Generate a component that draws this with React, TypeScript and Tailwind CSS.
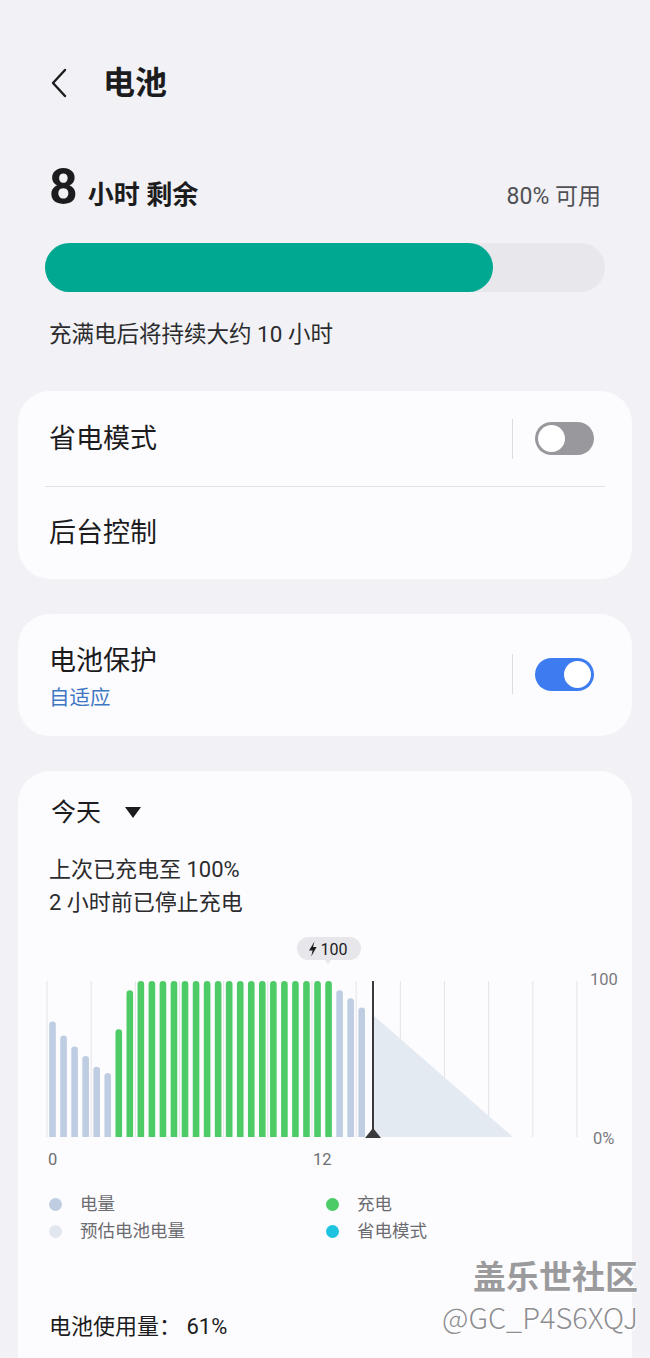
import React from 'react';

const usage: { h: number; c: 'g' | 'b' }[] = [
  { h: 74, c: 'b' },
  { h: 65, c: 'b' },
  { h: 58, c: 'b' },
  { h: 52, c: 'b' },
  { h: 45, c: 'b' },
  { h: 41, c: 'b' },
  { h: 69, c: 'g' },
  { h: 94, c: 'g' },
  ...Array.from({ length: 18 }, () => ({ h: 100, c: 'g' as const })),
  { h: 94, c: 'b' },
  { h: 89, c: 'b' },
  { h: 83, c: 'b' },
];

function Toggle({ on }: { on: boolean }) {
  return (
    <div className="flex items-center">
      <div className="h-[40px] w-px bg-[#dcdce0]" />
      <div
        className={
          on
            ? 'ml-[22px] flex h-[33px] w-[59px] items-center justify-end rounded-full bg-[#3d7cf0] p-[3px]'
            : 'ml-[22px] flex h-[33px] w-[59px] items-center justify-start rounded-full bg-[#98989d] p-[3px]'
        }
      >
        <div className="h-[27px] w-[27px] rounded-full bg-white" />
      </div>
    </div>
  );
}

function UsageChart() {
  const left = 29;
  const right = 559;
  const top = 51;
  const bottom = 207;
  const slot = (right - left) / 48;
  const span = bottom - top;
  const bw = 6.6;

  return (
    <svg width="614" height="245" viewBox="0 0 614 245" className="block">
      {Array.from({ length: 13 }, (_, k) => {
        const x = left + k * slot * 4;
        return <line key={k} x1={x} x2={x} y1={top} y2={bottom} stroke="#e3e3e8" strokeWidth="1" />;
      })}
      <polygon points={`355,85 495,${bottom} 355,${bottom}`} fill="#e4eaf2" />
      {usage.map((b, i) => {
        const cx = left + slot * (i + 0.5);
        const y = bottom - (b.h / 100) * span;
        const r = bw / 2;
        const d = `M${cx - r} ${bottom} L${cx - r} ${y + r} A${r} ${r} 0 0 1 ${cx + r} ${y + r} L${cx + r} ${bottom} Z`;
        return <path key={i} d={d} fill={b.c === 'g' ? '#4ccb66' : '#bfcde2'} />;
      })}
      <line x1="355" x2="355" y1={top} y2={bottom} stroke="#3a3a3c" strokeWidth="2" />
      <polygon points="347,208 363,208 355,198" fill="#3a3a3c" />

      <rect x="279" y="7" width="64" height="23" rx="11.5" fill="#e7e7eb" />
      <polygon points="306,29 314,29 310,34" fill="#e7e7eb" />
      <path d="M296.5 11.5 L291 20.5 L294.6 20.5 L293.2 26.5 L298.6 17 L295 17 Z" fill="#1c1c1e" />
      <text x="302.5" y="24.5" fontSize="16" fill="#1c1c1e" fontFamily="Roboto, sans-serif">
        100
      </text>

      <text x="30" y="235" fontSize="16.5" fill="#6e6e73" fontFamily="Roboto, sans-serif">
        0
      </text>
      <text x="295" y="235" fontSize="16.5" fill="#6e6e73" fontFamily="Roboto, sans-serif">
        12
      </text>
      <text x="572" y="55" fontSize="16.5" fill="#7a7a7f" fontFamily="Roboto, sans-serif">
        100
      </text>
      <text x="575" y="214" fontSize="16.5" fill="#7a7a7f" fontFamily="Roboto, sans-serif">
        0%
      </text>
    </svg>
  );
}

function Legend() {
  const items = [
    { label: '电量', color: 'bg-[#bfcde2]' },
    { label: '充电', color: 'bg-[#4ccb66]' },
    { label: '预估电池电量', color: 'bg-[#e2e7ef]' },
    { label: '省电模式', color: 'bg-[#1ec3df]' },
  ];
  return (
    <div className="mt-[16px] grid grid-cols-[277px_1fr] px-[31px]">
      {items.map((it) => (
        <div key={it.label} className="flex h-[27px] items-center">
          <span className={`h-[13px] w-[13px] rounded-full ${it.color}`} />
          <span className="ml-[18px] text-[17.5px] leading-[27px] text-[#6b6b70]">{it.label}</span>
        </div>
      ))}
    </div>
  );
}

export default function App() {
  return (
    <div className="relative h-[1358px] w-[650px] overflow-hidden bg-[#f2f2f6] font-['Roboto','Noto_Sans_CJK_SC',sans-serif] text-[#1c1c1e]">
      {/* header */}
      <div className="mt-[55px] flex h-[56px] items-center pl-[48px]">
        <svg width="22" height="32" viewBox="0 0 22 32" fill="none">
          <path d="M17 3 L5 16 L17 29" stroke="#1c1c1e" strokeWidth="2.4" strokeLinecap="round" strokeLinejoin="round" />
        </svg>
        <h1 className="ml-[33px] text-[32px] font-bold leading-[40px]">电池</h1>
      </div>

      {/* remaining time */}
      <div className="mt-[49px] flex h-[54px] items-baseline justify-between px-[49px]">
        <div className="flex items-baseline">
          <span className="text-[50px] font-bold leading-[54px]">8</span>
          <span className="ml-[10px] text-[26px] font-bold">小时 剩余</span>
        </div>
        <span className="text-[23px] text-[#505055]">80% 可用</span>
      </div>

      <div className="mx-[45px] mt-[29px] h-[49px] rounded-full bg-[#e8e8ec]">
        <div className="h-full w-[80%] rounded-full bg-[#00a891]" />
      </div>

      <p className="mt-[27px] px-[49px] text-[22.5px] leading-[30px] text-[#2c2c2e]">充满电后将持续大约 10 小时</p>

      {/* card 1 */}
      <div className="mx-[18px] mt-[42px] rounded-[32px] bg-[#fcfcfe]">
        <div className="flex h-[95px] items-center justify-between pl-[31px] pr-[38px]">
          <span className="text-[27px] leading-[34px]">省电模式</span>
          <Toggle on={false} />
        </div>
        <div className="mx-[27px] h-px bg-[#e2e2e6]" />
        <div className="flex h-[92px] items-center pl-[31px]">
          <span className="text-[27px] leading-[34px]">后台控制</span>
        </div>
      </div>

      {/* card 2 */}
      <div className="mx-[18px] mt-[35px] flex items-center justify-between rounded-[32px] bg-[#fcfcfe] pb-[24px] pl-[31px] pr-[38px] pt-[30px]">
        <div className="flex flex-col">
          <span className="text-[27px] leading-[34px]">电池保护</span>
          <span className="mt-[6px] text-[20.5px] leading-[28px] text-[#3f78c2]">自适应</span>
        </div>
        <div className="mb-[8px]">
          <Toggle on />
        </div>
      </div>

      {/* card 3 */}
      <div className="mx-[18px] mt-[35px] rounded-[32px] bg-[#fcfcfe] pb-[60px] pt-[26px]">
        <div className="flex h-[32px] items-center pl-[33px]">
          <span className="text-[25px] leading-[32px]">今天</span>
          <svg width="16" height="12" viewBox="0 0 16 12" className="ml-[24px]">
            <polygon points="0,0 16,0 8,11" fill="#1c1c1e" />
          </svg>
        </div>
        <div className="mt-[24px] px-[31px] text-[22px] leading-[33px] text-[#2c2c2e]">
          <p>上次已充电至 100%</p>
          <p>2 小时前已停止充电</p>
        </div>
        <div className="mt-[11px]">
          <UsageChart />
        </div>
        <Legend />
        <p className="mt-[67px] px-[31px] text-[22px] leading-[30px] text-[#1c1c1e]">电池使用量： 61%</p>
      </div>

      {/* watermark */}
      <div className="pointer-events-none absolute right-[12px] top-[1254px] flex flex-col items-end text-[#9b9b9e] [text-shadow:1px_1px_0_#ffffff,-1px_-1px_0_#ffffff]">
        <span className="font-['Noto_Sans_CJK_SC',sans-serif] text-[33px] font-bold leading-[42px]">盖乐世社区</span>
        <span className="font-['Noto_Sans_CJK_SC',sans-serif] text-[29px] font-light leading-[40px] text-[#8e8e92]">@GC_P4S6XQJ</span>
      </div>
    </div>
  );
}
